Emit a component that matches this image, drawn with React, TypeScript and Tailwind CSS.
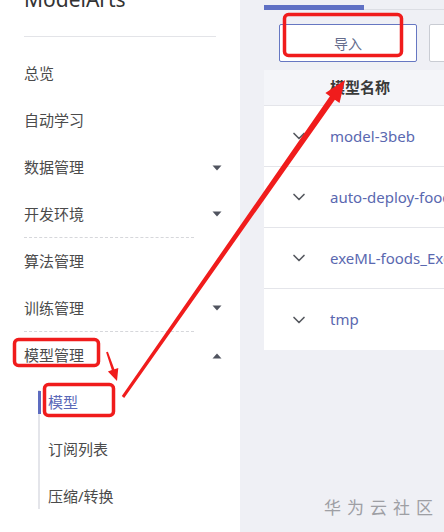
import { ChevronDown } from 'lucide-react'

const FONT = { fontFamily: '"Noto Sans", "Noto Sans CJK SC", sans-serif' }

type MenuItem = { label: string; caret?: 'down' | 'up'; dashed?: boolean }

const MENU: MenuItem[] = [
  { label: '总览' },
  { label: '自动学习' },
  { label: '数据管理', caret: 'down' },
  { label: '开发环境', caret: 'down', dashed: true },
  { label: '算法管理' },
  { label: '训练管理', caret: 'down', dashed: true },
  { label: '模型管理', caret: 'up' },
]

const SUBMENU = ['模型', '订阅列表', '压缩/转换']

const MODELS = ['model-3beb', 'auto-deploy-foods_ExeML', 'exeML-foods_ExeML', 'tmp']

function Caret({ dir }: { dir: 'down' | 'up' }) {
  return (
    <svg width="10" height="6" viewBox="0 0 10 6" className="mr-[18px]">
      {dir === 'down' ? (
        <path d="M0.5 0.5 H9.5 L5 5.5 Z" fill="#50545f" />
      ) : (
        <path d="M0.5 5.5 H9.5 L5 0.5 Z" fill="#50545f" />
      )}
    </svg>
  )
}

function Sidebar() {
  return (
    <aside className="flex w-[240px] shrink-0 flex-col bg-white">
      <div className="mx-6 -mt-[15px] border-b border-[#e3e4e8] pb-[23px] text-[21px] leading-[28px] text-[#333]">
        ModelArts
      </div>
      <nav className="mt-[13px] flex flex-col">
        {MENU.map((item) => (
          <div
            key={item.label}
            className={`ml-6 flex h-[47px] items-center justify-between text-[15px] text-[#4b4b4b] ${
              item.dashed ? 'mr-[46px] border-b border-dashed border-[#d6d7db]' : ''
            }`}
          >
            <span>{item.label}</span>
            {item.caret && (
              <span className={item.dashed ? '-mr-[46px]' : ''}>
                <Caret dir={item.caret} />
              </span>
            )}
          </div>
        ))}
        <div className="py-[11px] pl-[38px]">
          <div className="flex flex-col border-l-2 border-[#e4e5ea]">
            <div className="-my-[11px] flex flex-col">
              {SUBMENU.map((s, i) => (
                <div key={s} className="flex h-[47px] items-center text-[15px]">
                  {i === 0 ? (
                    <span className="-ml-[2px] flex h-[23px] items-center border-l-[3px] border-[#5d6cc0] pl-[7px] text-[#5a68b8]">
                      {s}
                    </span>
                  ) : (
                    <span className="pl-[8px] text-[#4b4b4b]">{s}</span>
                  )}
                </div>
              ))}
            </div>
          </div>
        </div>
      </nav>
    </aside>
  )
}

function Main() {
  return (
    <main className="flex min-w-0 flex-1 flex-col overflow-hidden bg-[#eff0f5] pl-6">
      <div className="flex h-[10px] items-end border-b border-[#dcdee4]">
        <div className="-mb-px h-[5px] w-[100px] bg-[#5f70c4]" />
      </div>
      <div className="mt-[14px] flex gap-3 pl-[15px]">
        <button className="flex h-[38px] w-[138px] shrink-0 items-center justify-center rounded-[2px] border border-[#6677c2] bg-white text-[14px] text-[#646c8c]">
          导入
        </button>
        <button className="h-[38px] w-[120px] shrink-0 rounded-[2px] border border-[#c9ccd3] bg-white" />
      </div>
      <div className="mt-2 w-[400px] bg-white">
        <div className="flex h-[36px] items-center border-b border-[#e4e5ea] bg-[#f4f5f9] pl-[66px] text-[15px] font-bold text-[#3a3a3a]">
          模型名称
        </div>
        {MODELS.map((m, i) => (
          <div
            key={m}
            className={`flex h-[61px] items-center whitespace-nowrap ${
              i < MODELS.length - 1 ? 'border-b border-[#e4e5ea]' : ''
            }`}
          >
            <ChevronDown className="ml-[25px] size-[20px] text-[#55585f]" strokeWidth={2} />
            <span className="ml-[21px] text-[15px] text-[#5a68b0]">{m}</span>
          </div>
        ))}
      </div>
      <div className="mt-auto mb-[12px] flex justify-end pr-[5px] text-[17px] tracking-[6px] text-[#8a8b90] opacity-80">
        华为云社区
      </div>
    </main>
  )
}

function Annotations() {
  return (
    <svg className="pointer-events-none absolute inset-0" width="444" height="532" viewBox="0 0 444 532">
      <g fill="none" stroke="#f01c1c" strokeWidth="3.5">
        <rect x="284.5" y="14.5" width="117" height="41" rx="4" />
        <rect x="14.5" y="339.5" width="84" height="26" rx="4" />
        <rect x="44.5" y="384.5" width="69" height="31" rx="4" />
      </g>
      <polygon
        fill="#f01c1c"
        points="124.2,397.9 334.9,99.7 339.5,103 345,80 325.4,93 329.9,96.3 121.8,396.1"
      />
      <polygon
        fill="#f01c1c"
        points="107.9,351.7 114.4,369.3 118.3,367.9 117,381 107.9,371.5 111.8,370.1 106.1,352.3"
      />
    </svg>
  )
}

export default function App() {
  return (
    <div className="relative flex h-[532px] w-[444px] overflow-hidden" style={FONT}>
      <Sidebar />
      <Main />
      <Annotations />
    </div>
  )
}
